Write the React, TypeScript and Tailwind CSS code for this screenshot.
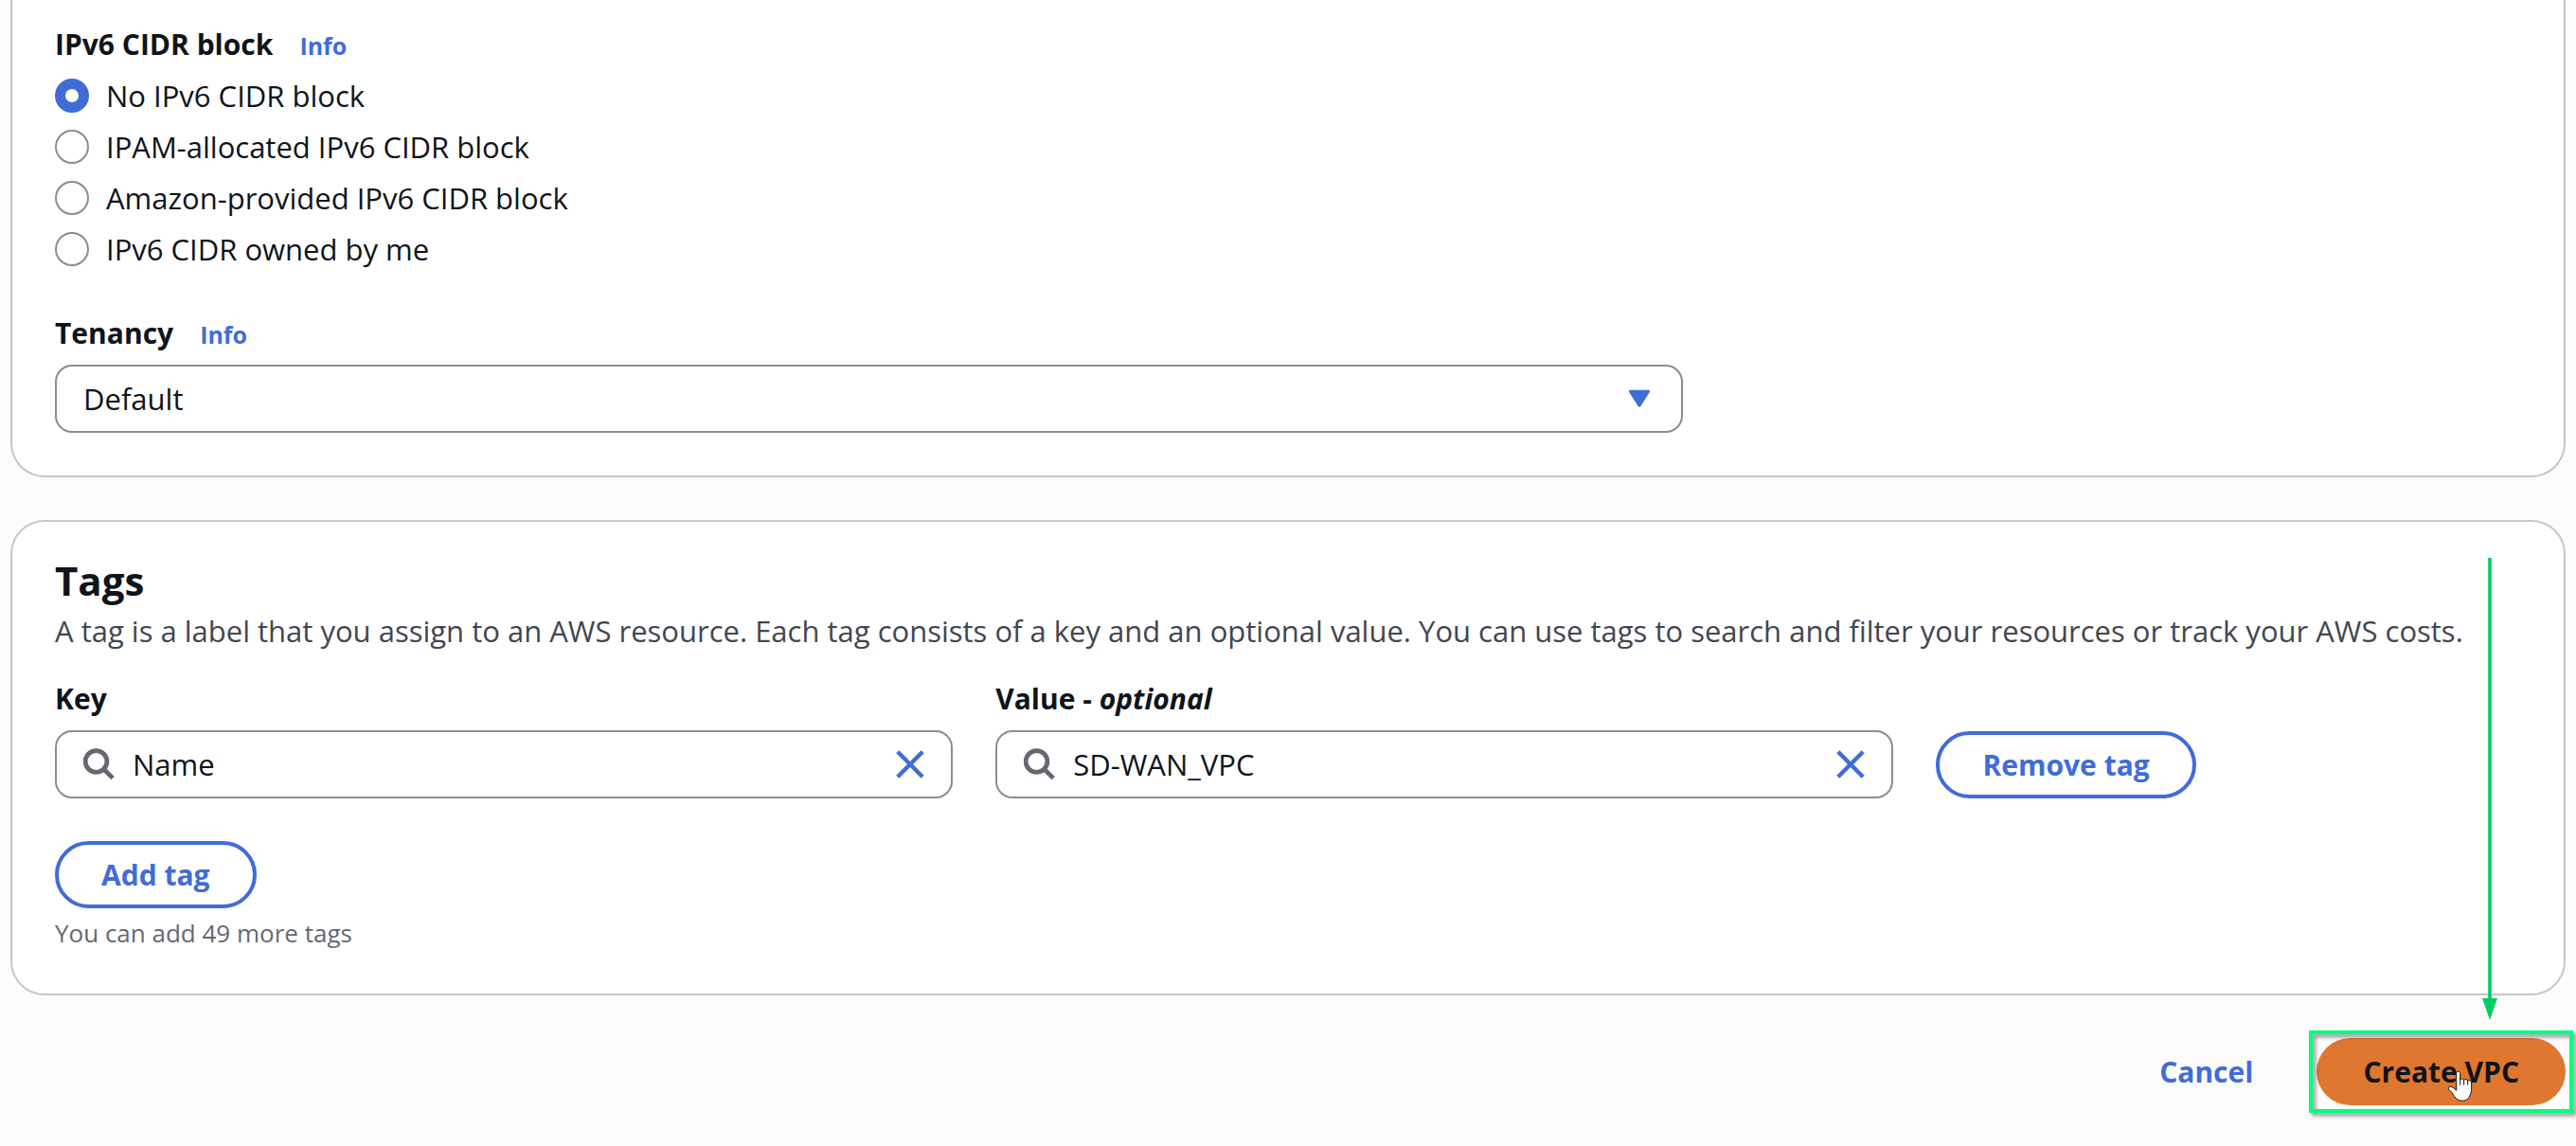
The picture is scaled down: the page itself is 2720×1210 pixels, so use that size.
import { useState } from "react";
import type { ReactNode } from "react";

const IPV6_OPTIONS = [
  "No IPv6 CIDR block",
  "IPAM-allocated IPv6 CIDR block",
  "Amazon-provided IPv6 CIDR block",
  "IPv6 CIDR owned by me",
];

function InfoLink() {
  return (
    <a href="#info" className="text-[25px] leading-none font-bold text-[#406cd8]">
      Info
    </a>
  );
}

function Card({ className, children }: { className: string; children: ReactNode }) {
  return (
    <section className={`border-2 border-[#c6c6cd] bg-white px-[45px] ${className}`}>{children}</section>
  );
}

function SearchField({ id, label, initial }: { id: string; label: ReactNode; initial: string }) {
  const [value, setValue] = useState(initial);
  return (
    <div className="min-w-0">
      <label htmlFor={id} className="block text-[30px] leading-10 font-bold">
        {label}
      </label>
      <div className="mt-[13px] flex h-[72px] items-center rounded-[18px] border-2 border-[#8c8c94] bg-white px-7">
        <svg viewBox="0 0 34 34" className="size-[34px] shrink-0" fill="none" stroke="#656871" strokeWidth="4.8" aria-hidden="true">
          <circle cx="13.5" cy="14" r="11.4" />
          <path d="M21.5 22l9.6 9.6" />
        </svg>
        <input
          id={id}
          type="text"
          value={value}
          onChange={(e) => setValue(e.target.value)}
          className="ml-[18px] h-full min-w-0 flex-1 bg-transparent text-[31px] outline-none"
        />
        <button type="button" aria-label="Clear" onClick={() => setValue("")} className="shrink-0">
          <svg viewBox="0 0 30 30" className="size-[30px]" fill="none" stroke="#406cd8" strokeWidth="4.4" aria-hidden="true">
            <path d="M1.8 1.8l26.4 26.4M28.2 1.8L1.8 28.2" />
          </svg>
        </button>
      </div>
    </div>
  );
}

function OutlineButton({ children }: { children: ReactNode }) {
  return (
    <button
      type="button"
      className="h-[71px] rounded-full border-4 border-[#406cd8] bg-white px-[45px] text-[30px] font-bold whitespace-nowrap text-[#406cd8]"
    >
      {children}
    </button>
  );
}

export default function App() {
  const [ipv6, setIpv6] = useState(IPV6_OPTIONS[0]);
  return (
    <main className="min-h-screen bg-[#fcfcfd] px-[11px] pb-[43px] font-['Open_Sans','Noto_Sans',sans-serif] text-[#0f141a]">
      <Card className="rounded-b-[36px] border-t-0 pt-[27px] pb-[45px]">
        <fieldset>
          <legend className="flex items-baseline gap-7 text-[30px] leading-10 font-bold">
            IPv6 CIDR block <InfoLink />
          </legend>
          <div className="mt-4 flex flex-col items-start gap-[18px]">
            {IPV6_OPTIONS.map((option) => (
              <label key={option} className="flex items-center gap-[18px] text-[31px] leading-9">
                <input
                  type="radio"
                  name="ipv6"
                  checked={ipv6 === option}
                  onChange={() => setIpv6(option)}
                  className="size-9 shrink-0 appearance-none rounded-full border-2 border-[#8c8c94] bg-white checked:border-[11px] checked:border-[#406cd8]"
                />
                {option}
              </label>
            ))}
          </div>
        </fieldset>

        <div className="mt-[51px] flex items-baseline gap-7 leading-10">
          <label htmlFor="tenancy" className="text-[30px] font-bold">
            Tenancy
          </label>
          <InfoLink />
        </div>
        <div className="relative mt-[13px] w-[66%]">
          <select
            id="tenancy"
            className="block h-[72px] w-full appearance-none rounded-[18px] border-2 border-[#8c8c94] bg-white px-7 text-[31px]"
          >
            <option>Default</option>
            <option>Dedicated</option>
          </select>
          <svg
            viewBox="0 0 24 20"
            className="pointer-events-none absolute top-[26px] right-[34px] h-5 w-6"
            fill="#406cd8"
            stroke="#406cd8"
            strokeWidth="3"
            strokeLinejoin="round"
            aria-hidden="true"
          >
            <path d="M2.4 2.3h19.2L12 17.2z" />
          </svg>
        </div>
      </Card>

      <Card className="mt-[45px] rounded-[36px] pt-[37px] pb-[46px]">
        <h2 className="text-[42px] leading-[50px] font-bold">Tags</h2>
        <p className="mt-1.5 text-[31px] leading-[45px] text-[#424650]">
          A tag is a label that you assign to an AWS resource. Each tag consists of a key and an optional value. You can
          use tags to search and filter your resources or track your AWS costs.
        </p>
        <div className="mt-[29px] grid grid-cols-[949fr_949fr_618fr] items-end gap-[45px]">
          <SearchField id="tag-key" label="Key" initial="Name" />
          <SearchField
            id="tag-value"
            label={
              <>
                Value - <i>optional</i>
              </>
            }
            initial="SD-WAN_VPC"
          />
          <div>
            <OutlineButton>Remove tag</OutlineButton>
          </div>
        </div>
        <div className="mt-[45px] flex">
          <OutlineButton>Add tag</OutlineButton>
        </div>
        <p className="mt-2 text-[26px] leading-9 text-[#656871]">You can add 49 more tags</p>
      </Card>

      <footer className="mt-[45px] flex items-center justify-end gap-[67px]">
        <button type="button" className="text-[30px] font-bold text-[#406cd8]">
          Cancel
        </button>
        <div className="relative">
          <button type="button" className="block h-[71px] rounded-full bg-[#e07730] px-[49px] text-[30px] font-bold whitespace-nowrap">
            Create VPC
          </button>
          {/* Highlight frame around the primary action */}
          <div className="pointer-events-none absolute -inset-2 border-4 border-[#00ff80] drop-shadow-[3px_3px_2px_rgba(0,0,0,0.45)]" />
          {/* Arrow pointing down at the primary action */}
          <svg
            viewBox="0 0 16 488"
            className="pointer-events-none absolute right-[72px] bottom-full mb-[19px] h-[488px] w-4"
            fill="#00cc66"
            aria-hidden="true"
          >
            <path d="M6.2 0h3.6v466h-3.6zM0 465h16L8 488z" />
          </svg>
          {/* Hand pointer */}
          <svg
            viewBox="72 90 84 102"
            className="pointer-events-none absolute top-[34px] left-[138px] h-[34px] w-7"
            fill="#fff"
            stroke="#111"
            strokeWidth="3"
            strokeLinecap="round"
            strokeLinejoin="round"
            aria-hidden="true"
          >
            <path d="M101 153V100c0-8 12-8 12 0v20c1-4 11-4 12 1c2-4 11-3 12 2c3-3 12-1 12 6v23c0 12-6 17-8 24c-5 11-25 14-36 7c-7-4-14-16-19-23c-4-5-12-10-9-16c4-5 12 0 15 2z" />
            <path d="M113 119v17M125 121v15M137 124v12" />
          </svg>
        </div>
      </footer>
    </main>
  );
}
